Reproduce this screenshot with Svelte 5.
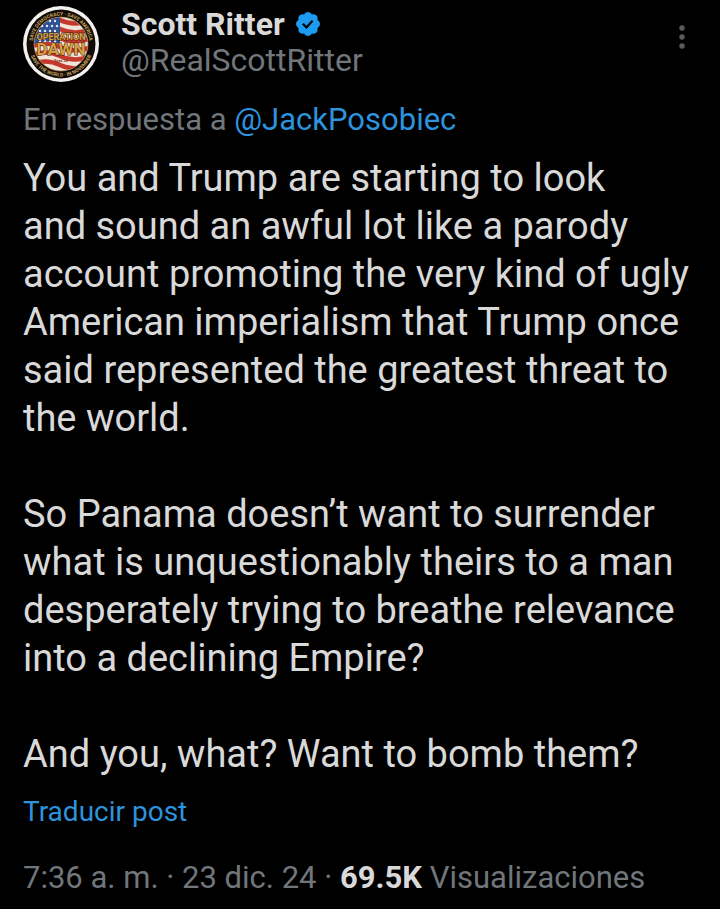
<script>
  const author = { name: 'Scott Ritter', handle: 'RealScottRitter' };
  const replyTo = 'JackPosobiec';
  const paragraphs = [
    'You and Trump are starting to look\nand sound an awful lot like a parody account promoting the very kind of ugly American imperialism that Trump once said represented the greatest threat to the world.',
    'So Panama doesn’t want to surrender what is unquestionably theirs to a man desperately trying to breathe relevance into a declining Empire?',
    'And you, what? Want to bomb them?',
  ];
  const stripes = [0, 1, 2, 3, 4, 5];
  const stars = [0, 1, 2, 3, 4].flatMap((row) =>
    [0, 1, 2, 3].map((col) => ({ x: 17 + col * 5 + (row % 2) * 2, y: 15 + row * 5 }))
  );
</script>

<article class="post">
  <header>
    <a class="avatar" href="#profile" aria-label={author.name}>
      <svg viewBox="0 0 76 76" aria-hidden="true">
        <defs>
          <clipPath id="flag"><circle cx="38" cy="38" r="27" /></clipPath>
          <path id="ring-top" d="M 38 66.5 A 28.5 28.5 0 0 1 38 9.5 A 28.5 28.5 0 0 1 38 66.5" />
          <path id="ring-bottom" d="M 38 5.5 A 32.5 32.5 0 0 0 38 70.5 A 32.5 32.5 0 0 0 38 5.5" />
        </defs>
        <circle cx="38" cy="38" r="38" fill="#f5f1ee" />
        <circle cx="38" cy="38" r="34.5" fill="#120d0a" />
        <g clip-path="url(#flag)">
          <rect x="10" y="10" width="56" height="56" fill="#f0e4da" />
          {#each stripes as i}
            <path
              d="M 8 {14 + i * 9} q 14 -7 29 0 t 31 0"
              fill="none"
              stroke="#c5382c"
              stroke-width="4.5"
            />
          {/each}
          <path d="M 10 10 H 37 V 38 Q 24 33 10 38 Z" fill="#2d5396" />
          {#each stars as star}
            <circle cx={star.x} cy={star.y} r="1.2" fill="#e8eaf0" />
          {/each}
        </g>
        <circle cx="38" cy="38" r="27" fill="none" stroke="#b98d3c" stroke-width="0.6" />
        <text class="ring">
          <textPath href="#ring-top" startOffset="50%">SAVE DEMOCRACY · SAVE AMERICA</textPath>
        </text>
        <text class="ring">
          <textPath href="#ring-bottom" startOffset="50%">SAVE THE WORLD · IN NOVEMBER</textPath>
        </text>
        <text class="operation" x="38" y="34">OPERATION</text>
        <text class="dawn" x="38" y="49">DAWN</text>
        <text class="date" x="38" y="56">Sept 28</text>
      </svg>
    </a>
    <div class="names">
      <div class="name">
        <strong>{author.name}</strong>
        <svg class="verified" viewBox="0 0 24 24" role="img" aria-label="Verified">
          <path
            fill="#1d9bf0"
            d="M22.25 12c0-1.43-.88-2.67-2.19-3.34.46-1.39.2-2.9-.81-3.91s-2.52-1.27-3.91-.81c-.66-1.31-1.91-2.19-3.34-2.19s-2.67.88-3.33 2.19c-1.4-.46-2.91-.2-3.92.81s-1.26 2.52-.8 3.91c-1.31.67-2.2 1.91-2.2 3.34s.89 2.67 2.2 3.34c-.46 1.39-.21 2.9.8 3.91s2.52 1.26 3.91.81c.67 1.31 1.91 2.19 3.34 2.19s2.68-.88 3.34-2.19c1.39.45 2.9.2 3.91-.81s1.27-2.52.81-3.91c1.31-.67 2.19-1.91 2.19-3.34z"
          />
          <path d="M7.6 11.8l3.1 3.1 5.2-5.8" fill="none" stroke="#000" stroke-width="1.9" />
        </svg>
      </div>
      <span class="handle">@{author.handle}</span>
    </div>
    <button class="more" aria-label="Más opciones">
      <svg viewBox="0 0 6 24" aria-hidden="true">
        <circle cx="3" cy="3" r="2.7" />
        <circle cx="3" cy="12" r="2.7" />
        <circle cx="3" cy="21" r="2.7" />
      </svg>
    </button>
  </header>

  <p class="reply">En respuesta a <a href="#reply">@{replyTo}</a></p>

  <div class="body">
    {#each paragraphs as paragraph}
      <p>{paragraph}</p>
    {/each}
  </div>

  <button class="translate">Traducir post</button>

  <footer>7:36 a. m. · 23 dic. 24 · <strong>69.5K</strong> Visualizaciones</footer>
</article>

<style>
  :global(body) {
    margin: 0;
    background: #000;
  }
  .post {
    padding: 6px 23px 12px;
    color: #d9d9d9;
    background: #000;
    font-family: Roboto, 'Noto Sans', sans-serif;
  }
  header {
    display: flex;
    align-items: flex-start;
  }
  .avatar {
    flex: none;
    width: 76px;
    height: 76px;
  }
  .avatar svg {
    display: block;
  }
  .ring {
    fill: #c9a45a;
    font-size: 5px;
    font-weight: 700;
    text-anchor: middle;
  }
  .operation,
  .dawn,
  .date {
    fill: #d9a03f;
    stroke: #3a2412;
    stroke-width: 1px;
    paint-order: stroke;
    font-weight: 700;
    text-anchor: middle;
  }
  .operation {
    font-size: 9px;
  }
  .dawn {
    font-size: 17px;
  }
  .date {
    font-size: 4px;
    stroke: none;
    fill: #8a3a20;
  }
  .names {
    flex: 1;
    min-width: 0;
    margin-left: 22px;
  }
  .name {
    display: flex;
    align-items: center;
    gap: 9px;
    font-size: 32px;
    line-height: 36px;
  }
  .verified {
    width: 28px;
    height: 28px;
  }
  .handle,
  .reply,
  footer {
    color: #71767b;
    font-size: 31px;
    line-height: 36px;
  }
  .handle {
    font-size: 32px;
  }
  button {
    padding: 0;
    border: 0;
    background: none;
    font: inherit;
    cursor: pointer;
  }
  .more {
    margin: 19px 12px 0 0;
  }
  .more svg {
    display: block;
    width: 6px;
    height: 24px;
    fill: #5b5b5b;
  }
  .reply {
    margin: 20px 0 16px;
  }
  a,
  .translate {
    color: #2d93dd;
    text-decoration: none;
  }
  .body {
    font-size: 38px;
    line-height: 48px;
  }
  .body p {
    margin: 0 0 48px;
    white-space: pre-line;
  }
  .body p:last-child {
    margin-bottom: 0;
  }
  .translate {
    display: block;
    margin-top: 16px;
    font-size: 28px;
    line-height: 36px;
  }
  footer {
    margin-top: 30px;
  }
  footer strong {
    color: #d9d9d9;
  }
</style>
